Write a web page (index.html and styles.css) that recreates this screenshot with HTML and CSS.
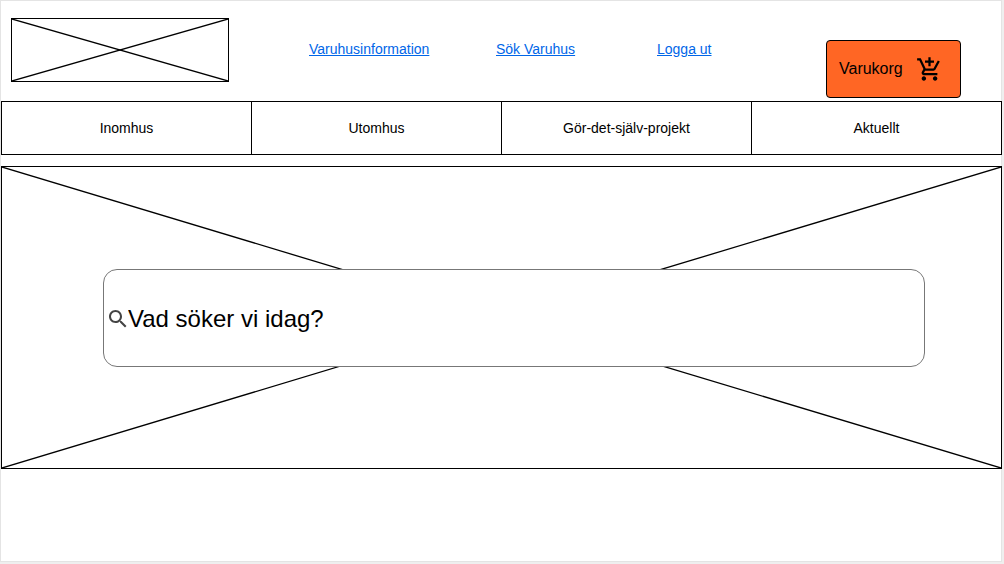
FILE: index.html
```html
<!DOCTYPE html>
<html lang="sv">
<head>
<meta charset="utf-8">
<meta name="viewport" content="width=device-width, initial-scale=1">
<title>Varuhus</title>
<link rel="stylesheet" href="styles.css">
</head>
<body>
<div class="page">
  <header class="header">
    <svg class="logo" role="img" aria-label="Logotyp">
      <line x1="0" y1="0" x2="100%" y2="100%"/>
      <line x1="100%" y1="0" x2="0" y2="100%"/>
    </svg>
    <nav class="links">
      <a href="#info">Varuhusinformation</a>
      <a href="#varuhus">Sök Varuhus</a>
      <a href="#logout">Logga ut</a>
    </nav>
    <button class="cart" type="button">
      <span>Varukorg</span>
      <svg class="cart-icon" viewBox="0 0 24 24" aria-hidden="true"><path d="M11 9h2V6h3V4h-3V1h-2v3H8v2h3v3zm-4 9c-1.1 0-1.99.9-1.99 2S5.9 22 7 22s2-.9 2-2-.9-2-2-2zm10 0c-1.1 0-1.99.9-1.99 2s.89 2 1.99 2 2-.9 2-2-.9-2-2-2zm-9.83-3.25l.03-.12.9-1.63h7.45c.75 0 1.41-.41 1.75-1.03l3.86-7.01L19.42 4h-.01l-1.1 2-2.76 5H8.53l-.13-.27L6.16 6l-.95-2-.94-2H1v2h2l3.6 7.59-1.35 2.45c-.16.28-.25.61-.25.96 0 1.1.9 2 2 2h12v-2H7.42c-.13 0-.25-.11-.25-.25z"/></svg>
    </button>
  </header>
  <nav class="menu">
    <a href="#inomhus">Inomhus</a>
    <a href="#utomhus">Utomhus</a>
    <a href="#projekt">Gör-det-själv-projekt</a>
    <a href="#aktuellt">Aktuellt</a>
  </nav>
  <main class="hero">
    <svg class="hero-image" aria-hidden="true">
      <line x1="0" y1="0" x2="100%" y2="100%"/>
      <line x1="100%" y1="0" x2="0" y2="100%"/>
    </svg>
    <form class="search">
      <label class="search-label" for="search" aria-label="Sök">
        <svg class="search-icon" viewBox="0 0 24 24" aria-hidden="true"><path d="M15.5 14h-.79l-.28-.27C15.41 12.59 16 11.11 16 9.5 16 5.91 13.09 3 9.5 3S3 5.91 3 9.5 5.91 16 9.5 16c1.61 0 3.09-.59 4.23-1.57l.27.28v.79l5 4.99L20.49 19l-4.99-5zm-6 0C7.01 14 5 11.99 5 9.5S7.01 5 9.5 5 14 7.01 14 9.5 11.99 14 9.5 14z"/></svg>
      </label>
      <input class="search-input" id="search" type="text" placeholder="Vad söker vi idag?">
    </form>
  </main>
</div>
</body>
</html>
```
FILE: styles.css
```css
* {
  box-sizing: border-box;
}

body {
  margin: 0;
  padding: 0 2px 2px 0;
  min-height: 100vh;
  display: flex;
  flex-direction: column;
  background: #efefef;
  color: #000;
  font-family: Arial, "Liberation Sans", sans-serif;
  font-size: 14px;
}

.page {
  flex: 1;
  padding: 1px 0 1px 1px;
  background: #fff;
  box-shadow: inset 0 0 0 1px #e4e4e4;
}

.header {
  display: flex;
  align-items: flex-start;
  padding: 17px 41px 3px 10px;
}

.logo {
  flex: none;
  width: 218px;
  height: 64px;
  border: 1px solid #000;
}

.logo line,
.hero-image line {
  stroke: #000;
  stroke-width: 1.3;
}

.links {
  display: grid;
  grid-template-columns: 187px 161px auto;
  margin: 23px auto 0 80px;
  line-height: 16px;
}

.links a {
  justify-self: start;
  color: #0066e8;
}

.cart {
  display: flex;
  align-items: center;
  gap: 13px;
  flex: none;
  width: 135px;
  height: 58px;
  margin-top: 22px;
  padding: 0 12px;
  border: 1px solid #000;
  border-radius: 4px;
  background: #ff6624;
  color: #000;
  font: inherit;
  font-size: 16px;
}

.cart-icon {
  flex: none;
  width: 27px;
  height: 27px;
}

.menu {
  display: grid;
  grid-template-columns: repeat(4, 1fr);
  border: solid #000;
  border-width: 1px 1px 1px 0;
  background: #fff;
}

.menu a {
  padding: 18px 0;
  border-left: 1px solid #000;
  color: inherit;
  line-height: 16px;
  text-align: center;
  text-decoration: none;
}

.hero {
  position: relative;
  margin-top: 11px;
  padding: 102px 76px 101px 101px;
  border: 1px solid #000;
  background: #fff;
}

.hero-image {
  position: absolute;
  inset: 0;
  width: 100%;
  height: 100%;
}

.search {
  position: relative;
  display: flex;
  align-items: center;
  height: 98px;
  padding: 2px 2px 0;
  border: 1px solid #777;
  border-radius: 14px;
  background: #fff;
}

.search-label {
  display: flex;
}

.search-icon {
  width: 24px;
  height: 24px;
  fill: #444;
}

.search-input {
  flex: 1;
  min-width: 0;
  height: 40px;
  margin-left: -2px;
  padding: 0;
  border: 0;
  outline: 0;
  background: transparent;
  color: #000;
  font: inherit;
  font-size: 24px;
}

.search-input::placeholder {
  color: #000;
  opacity: 1;
}
```
